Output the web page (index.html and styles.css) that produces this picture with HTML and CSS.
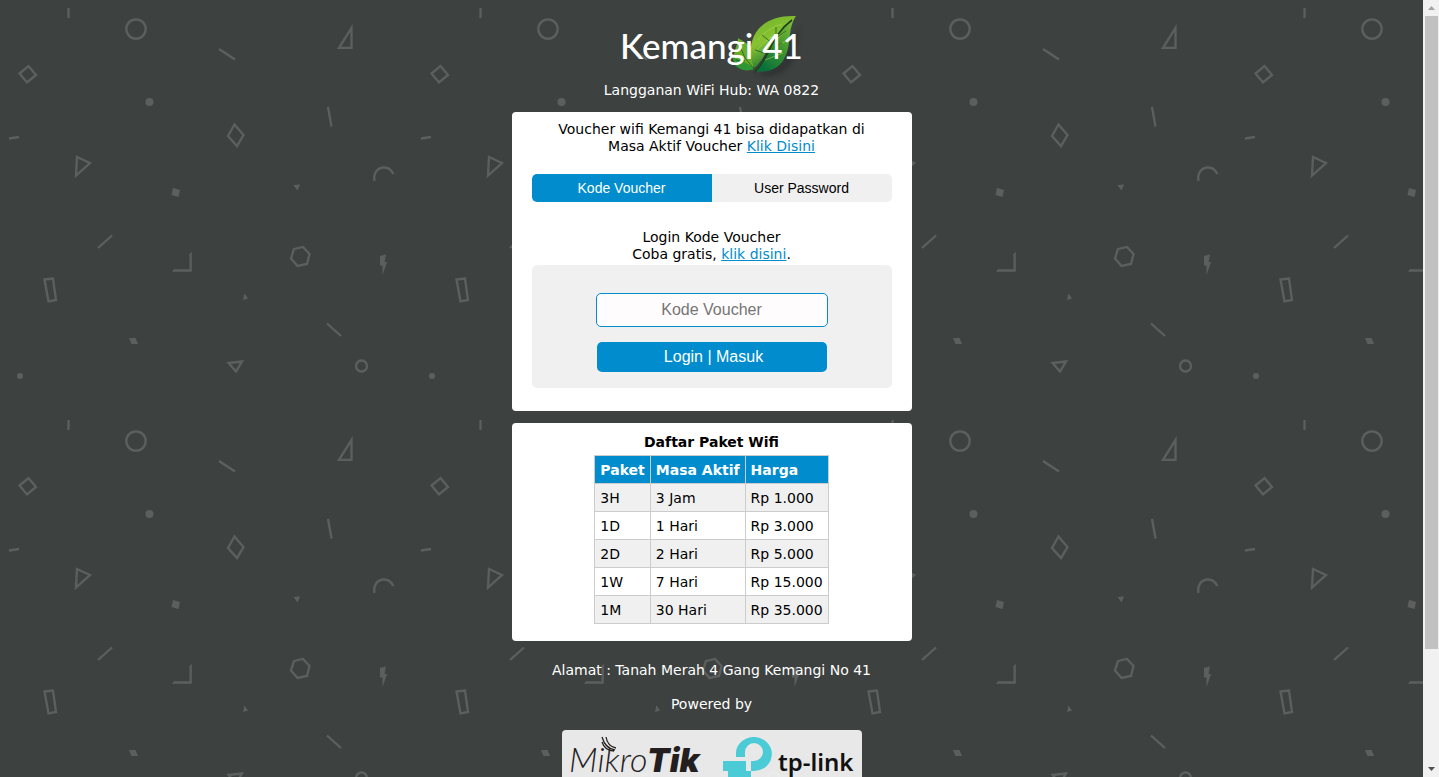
FILE: index.html
```html
<!DOCTYPE html>
<html lang="id">
<head>
<meta charset="utf-8">
<title>Kemangi 41</title>
<meta name="viewport" content="width=device-width, initial-scale=1">
<link rel="stylesheet" href="styles.css">
</head>
<body>
<div class="window">
  <div class="page">
    <header class="header">
      <svg class="brand" viewBox="0 -4 200 74" role="img" aria-label="Kemangi 41">
        <defs>
          <linearGradient id="leaf" x1="0.2" y1="0" x2="0.6" y2="1">
            <stop offset="0" stop-color="#74b52c"/>
            <stop offset="0.45" stop-color="#86c232"/>
            <stop offset="1" stop-color="#0c6a33"/>
          </linearGradient>
          <linearGradient id="leafEdge" x1="1" y1="0" x2="0.3" y2="1">
            <stop offset="0" stop-color="#8fc63d"/>
            <stop offset="0.55" stop-color="#3f962f"/>
            <stop offset="1" stop-color="#08713a"/>
          </linearGradient>
          <filter id="soft" x="-20%" y="-20%" width="140%" height="140%"><feGaussianBlur stdDeviation="2"/></filter>
        </defs>
        <path d="M188 15C185 29 186 42 179 51C172 61 165 65 150 64L144 62C160 60 174 48 179 30Z" fill="#2b2e2d" filter="url(#soft)" opacity="0.7"/>
        <path d="M126 26C132 30 138 32 141 39C144 46 142 52 141 57C134 56 126 53 123 47C120 41 126 34 126 26Z" fill="#69ad2c"/>
        <path d="M120 45C126 48 136 50 142 57C135 60 127 58 123 53Z" fill="#2f9635"/>
        <path d="M184 4C166 3 149 9 142 24C136 37 140 50 142 56C153 48 163 20 184 4Z" fill="url(#leaf)"/>
        <path d="M184 4C175 17 180 34 172 47C166 58 154 61 143 59C157 45 162 20 184 4Z" fill="url(#leafEdge)"/>
        <path d="M146 28C151 21 160 15 170 12M143 40C150 33 153 28 166 21M164 28L173 20M158 38L174 29M153 48L171 41" fill="none" stroke="#b8d84a" stroke-width="1" opacity="0.55"/>
        <path d="M180 8C164 20 161 32 153 46C149 53 146 57 142 61" fill="none" stroke="#1d401e" stroke-width="1.6"/>
        <path d="M164 23V15M160 31L150 23M155 42L143 38M163 27L174 19M158 38L170 31M128 34L133 46L143 58M124 48L133 49" fill="none" stroke="#285b20" stroke-width="0.8"/>
        <text class="brand-text" x="8" y="47" fill="#ffffff">Kemangi 41</text>
      </svg>
      <p class="line">Langganan WiFi Hub: WA 0822</p>
    </header>

    <main class="content">
      <section class="card login-card">
        <p class="line">Voucher wifi Kemangi 41 bisa didapatkan di<br>Masa Aktif Voucher <a class="link" href="#paket">Klik Disini</a></p>
        <div class="tabs">
          <button class="tab tab-active" type="button">Kode Voucher</button>
          <button class="tab" type="button">User Password</button>
        </div>
        <p class="line"><label for="voucher">Login Kode Voucher</label><br>Coba gratis, <a class="link" href="#trial">klik disini</a>.</p>
        <form class="panel">
          <input class="field" id="voucher" type="text" placeholder="Kode Voucher">
          <button class="submit" type="submit">Login | Masuk</button>
        </form>
      </section>

      <section class="card plan-card" id="paket">
        <table class="plans">
          <caption class="plans-title">Daftar Paket Wifi</caption>
          <thead><tr><th>Paket</th><th>Masa Aktif</th><th>Harga</th></tr></thead>
          <tbody>
            <tr><td>3H</td><td>3 Jam</td><td>Rp 1.000</td></tr>
            <tr><td>1D</td><td>1 Hari</td><td>Rp 3.000</td></tr>
            <tr><td>2D</td><td>2 Hari</td><td>Rp 5.000</td></tr>
            <tr><td>1W</td><td>7 Hari</td><td>Rp 15.000</td></tr>
            <tr><td>1M</td><td>30 Hari</td><td>Rp 35.000</td></tr>
          </tbody>
        </table>
      </section>
    </main>

    <footer class="footer">
      <p class="line">Alamat : Tanah Merah 4 Gang Kemangi No 41</p>
      <p class="line">Powered by</p>
      <svg class="partners" viewBox="0 0 300 47" role="img" aria-label="MikroTik, tp-link">
        <path d="M40 12C42 18 46 21 52 21M40 7C42 14 47 19 53 20M44 7C45 13 49 17 54 18" fill="none" stroke="#262223" stroke-width="1.3"/>
        <text class="mikro" x="7" y="42" fill="#262223">Mikro</text>
        <text class="tik" x="85" y="42" fill="#231f20">Tik</text>
        <path d="M174 27V22A18 17 0 1 1 192 41H189V47H166V41H161V31H184V41H189V31H192A9 9 0 1 0 183 22V27Z" fill="#4acbd6"/>
        <text class="tplink" x="216" y="41" fill="#111111">tp-link</text>
      </svg>
    </footer>
  </div>

  <div class="scrollbar" aria-hidden="true">
    <svg class="scroll-arrow" viewBox="0 0 16 16"><path d="M5 10H12L8.500 6Z" fill="#a3a3a3"/></svg>
    <div class="scroll-track"><div class="scroll-thumb"></div></div>
    <svg class="scroll-arrow" viewBox="0 0 16 16"><path d="M5 6H12L8.500 10Z" fill="#505050"/></svg>
  </div>
</div>
</body>
</html>
```

FILE: styles.css
```css
* { box-sizing: border-box; }

body {
  margin: 0;
  color: #000;
  font: 14px/17px Verdana, "DejaVu Sans", sans-serif;
}

.window {
  display: flex;
  height: 100vh;
  overflow: hidden;
  background-color: #3d413f;
}

.page {
  flex: 1;
  min-width: 0;
  display: flex;
  flex-direction: column;
  align-items: center;
  padding-top: 8px;
  text-align: center;
  overflow: hidden;
  background: url("data:image/svg+xml,%3Csvg xmlns='http://www.w3.org/2000/svg' width='412' height='412'%3E%3Cg fill='none' stroke='%235c5f5e' stroke-width='2.3'%3E%3Cpath d='M68.500 8V18M219 49L235 59.500M9 138.500L19 137M328 107L331.500 126.500M98 248L112 235.500M327 323.500L341 336'/%3E%3Ccircle cx='136' cy='29' r='9.700'/%3E%3Ccircle cx='361.500' cy='366' r='5.500'/%3E%3Cpath d='M28.500 66L36 75L27 82.500L19.500 73.500ZM77 157L90 163L76 175.500ZM234.500 124.500L243.500 135L237 146L228 136ZM351.500 28V47.800H339ZM44.500 279.500L53 278.500L56 300L48.500 301.300ZM294 249L303 247L309.500 254L307 264L297.500 266L291 258.500ZM228.500 363L242 361.500L236 371.500ZM374.500 181C373 174 377 167.500 384 167.500C389 167.500 391 170 393.500 174'/%3E%3C/g%3E%3Cg fill='%235c5f5e'%3E%3Ccircle cx='149.500' cy='102' r='4'/%3E%3Ccircle cx='20' cy='376' r='3'/%3E%3Cpath d='M173 188L180 190L178.500 197L171.500 195ZM293.500 185L300 184.500L297.500 190.500ZM172 271.700L174 269.200H189.500V254L191.800 252V271.700ZM129 338H135.500L138 344H131.500ZM380 256L386 254.500L384.500 262H387L382.500 275V265.500H380ZM244.500 293.500L248 298.500L243 300Z'/%3E%3C/g%3E%3C/svg%3E");
}

.line { margin: 0; }

.header { color: #fff; }

.brand {
  display: block;
  width: 200px;
  margin: 0 auto;
}

.brand-text { font: 500 35px Lato, sans-serif; }

.content {
  display: grid;
  gap: 12px;
  width: 100%;
  max-width: 400px;
  margin-top: 13px;
}

.card {
  padding: 9px 20px 23px;
  border-radius: 4px;
  background: #fff;
}

.link { color: #008ccd; }

.tabs {
  display: flex;
  margin: 19px 0 27px;
  border-radius: 5px;
  overflow: hidden;
}

.tab {
  flex: 1;
  height: 28px;
  padding: 0;
  border: 0;
  background: #f0f0f0;
  color: #000;
  font: 14px "Liberation Sans", Arial, sans-serif;
}

.tab-active { background: #008ccd; color: #fff; }

.panel {
  display: flex;
  flex-direction: column;
  align-items: center;
  gap: 15px;
  margin-top: 2px;
  padding: 28px 20px 16px;
  border-radius: 5px;
  background: #f0f0f0;
}

.field, .submit {
  border-radius: 5px;
  font: 16px "Liberation Sans", Arial, sans-serif;
  text-align: center;
}

.field {
  width: 232px;
  height: 34px;
  border: 1px solid #008ccd;
  background: #fffcfd;
}

.field::placeholder { color: #757575; }

.submit {
  width: 230px;
  height: 30px;
  padding: 0 0 0 4px;
  border: 0;
  background: #008ccd;
  color: #fff;
}

.plan-card { padding-top: 11px; padding-bottom: 17px; }

.plans {
  margin: 0 auto;
  border-collapse: collapse;
  text-align: left;
}

.plans-title {
  padding-bottom: 4px;
  font-weight: bold;
}

.plans th, .plans td {
  padding: 6px 5px 4px;
  border: 1px solid #ccc;
}

.plans th { background: #008ccd; color: #fff; }

.plans tbody tr:nth-child(odd) { background: #f0f0f0; }

.footer {
  display: grid;
  gap: 17px;
  justify-items: center;
  margin-top: 21px;
  color: #fff;
}

.partners {
  width: 300px;
  border-radius: 4px 4px 0 0;
  background: rgba(255, 255, 255, 0.88);
}

.mikro { font: italic 300 34px Lato, sans-serif; }
.tik { font: italic 900 33px Inter, sans-serif; }
.tplink { font: 600 24px "Noto Sans", sans-serif; }

.scrollbar {
  display: flex;
  flex-direction: column;
  width: 16px;
  background: #f1f1f1;
}

.scroll-arrow { width: 16px; height: 16px; }

.scroll-track { flex: 1; padding: 0 1px 0 2px; }

.scroll-thumb { height: 85%; background: #c1c1c1; }
```
